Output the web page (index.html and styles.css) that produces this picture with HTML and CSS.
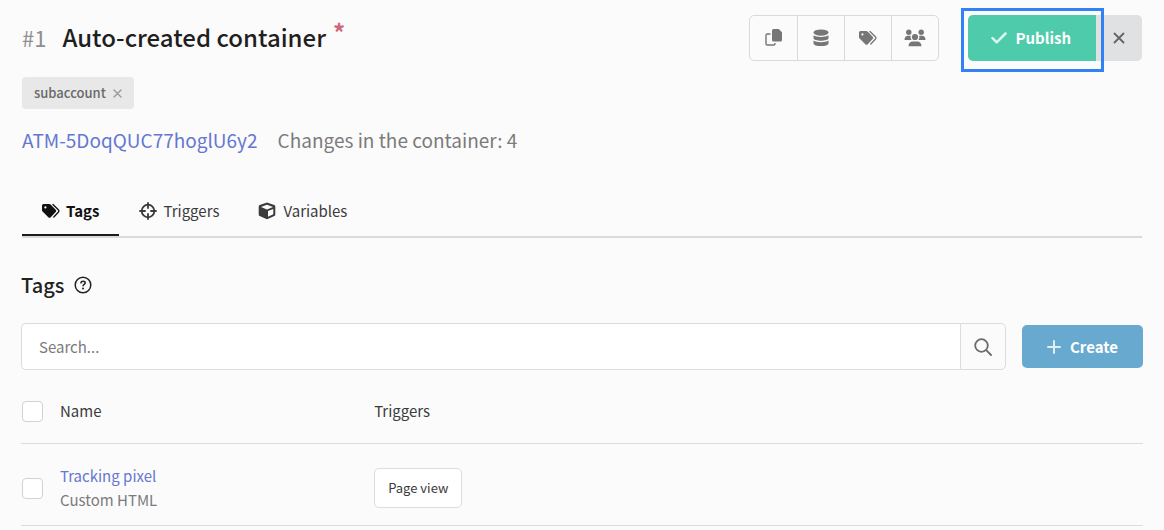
FILE: index.html
```html
<!DOCTYPE html>
<html lang="en">
<head>
<meta charset="utf-8">
<meta name="viewport" content="width=device-width, initial-scale=1">
<title>Auto-created container</title>
<link rel="stylesheet" href="styles.css">
</head>
<body>
<svg class="sprite" aria-hidden="true">
  <symbol id="tags" viewBox="0 0 18 16">
    <path fill="currentColor" fill-rule="evenodd" d="M0 2.500A1.500 1.500 0 0 1 1.500 1H7.200a2 2 0 0 1 1.400.6L13.700 6.700a1.700 1.700 0 0 1 0 2.400l-5 5.100a1.700 1.700 0 0 1-2.400 0L.6 8.600A2 2 0 0 1 0 7.200zM3.400 3.300a1.100 1.100 0 1 0 0 2.200 1.100 1.100 0 0 0 0-2.200z"/>
    <path fill="none" stroke="currentColor" stroke-width="1.300" stroke-linecap="round" d="M11 1.500l5.300 5.300a1.700 1.700 0 0 1 0 2.400L11.800 14"/>
  </symbol>
</svg>
<main class="page">
  <header class="header">
    <div class="heading">
      <span class="number">#1</span>
      <h1 class="title">Auto-created container</h1>
      <span class="required">*</span>
    </div>
    <div class="actions">
      <div class="tools">
        <button class="tool" type="button" aria-label="Copy">
          <svg width="18" height="18" viewBox="0 0 18 18"><path fill="currentColor" d="M8.500 0h5.200L17 3.300V11a1.500 1.500 0 0 1-1.500 1.500h-7A1.500 1.500 0 0 1 7 11V1.500A1.500 1.500 0 0 1 8.500 0z"/><path fill="none" stroke="currentColor" stroke-width="1.400" d="M5.500 5H2.200A1.200 1.200 0 0 0 1 6.200v8.600A1.200 1.200 0 0 0 2.200 16h6.600a1.200 1.200 0 0 0 1.200-1.200V14"/></svg>
        </button>
        <button class="tool" type="button" aria-label="Data">
          <svg width="18" height="18" viewBox="0 0 18 18"><g fill="currentColor"><ellipse cx="9" cy="3.600" rx="7.500" ry="3.200"/><path d="M1.500 6.200C4.500 8.500 13.500 8.500 16.500 6.200V9C16.500 12.600 1.500 12.600 1.500 9z"/><path d="M1.500 11.600c3 2.300 12 2.300 15 0v2.600c0 3.800-15 3.800-15 0z"/></g></svg>
        </button>
        <button class="tool" type="button" aria-label="Tags">
          <svg width="18" height="16"><use href="#tags"/></svg>
        </button>
        <button class="tool" type="button" aria-label="Users">
          <svg width="22" height="18" viewBox="0 0 22 18"><g fill="currentColor"><circle cx="4.800" cy="3.300" r="2.700"/><circle cx="17.200" cy="3.300" r="2.700"/><circle cx="11" cy="8" r="3.100"/><path d="M.5 11c0-3 1.500-4.200 3.500-4.200h2.800C6.300 8.500 6.700 10 7.600 11zM21.500 11c0-3-1.500-4.200-3.500-4.200h-2.800c.5 1.700.1 3.200-.8 4.200zM4.500 17.300c0-3 1.800-4.900 4.300-4.900h4.400c2.500 0 4.300 1.900 4.300 4.900z"/></g></svg>
        </button>
      </div>
      <div class="publish-group">
        <button class="publish" type="button">
          <svg width="16" height="12" viewBox="0 0 16 12"><path d="M1.500 6.200l4.200 4.200L14.500 1.500" fill="none" stroke="currentColor" stroke-width="2.500" stroke-linecap="round" stroke-linejoin="round"/></svg>
          Publish
        </button>
        <button class="dismiss" type="button" aria-label="Close">
          <svg width="12" height="12" viewBox="0 0 12 12"><path d="M1.500 1.500l9 9m0-9l-9 9" stroke="currentColor" stroke-width="1.800" stroke-linecap="round"/></svg>
        </button>
        <span class="focus-frame"></span>
      </div>
    </div>
  </header>

  <div class="labels">
    <span class="label">subaccount
      <button class="label-remove" type="button" aria-label="Remove subaccount"><svg width="9" height="9" viewBox="0 0 9 9"><path d="M1 1l7 7m0-7L1 8" stroke="currentColor" stroke-width="1.400" stroke-linecap="round"/></svg></button>
    </span>
  </div>

  <p class="summary"><a class="link" href="#container">ATM-5DoqQUC77hoglU6y2</a><span>Changes in the container: 4</span></p>

  <nav class="tabs">
    <a class="tab tab-active" href="#tags-tab"><svg width="18" height="16"><use href="#tags"/></svg>Tags</a>
    <a class="tab" href="#triggers-tab"><svg width="18" height="18" viewBox="0 0 18 18"><g fill="none" stroke="currentColor" stroke-width="1.800" stroke-linecap="round"><circle cx="9" cy="9" r="6.300"/><path d="M9 1v5M9 12v5M1 9h5M12 9h5"/></g></svg>Triggers</a>
    <a class="tab" href="#variables-tab"><svg width="18" height="18" viewBox="0 0 18 18"><path fill="currentColor" fill-rule="evenodd" d="M8.300.7a2 2 0 0 1 1.400 0l6.500 2.400A1.700 1.700 0 0 1 17.300 4.700v7.700a1.700 1.700 0 0 1-1 1.600l-6.600 3.100a1.700 1.700 0 0 1-1.400 0L1.700 14a1.700 1.700 0 0 1-1-1.600V4.700a1.700 1.700 0 0 1 1.100-1.600zM9 2.700L3 4.900l6 2.500 6-2.500zM10 9.100v5.700l5.300-2.600V6.900z"/></svg>Variables</a>
  </nav>

  <div class="section-heading">
    <h2 class="section-title">Tags</h2>
    <svg width="18" height="18" viewBox="0 0 18 18" role="img" aria-label="Help"><circle cx="9" cy="9" r="7.800" fill="none" stroke="currentColor" stroke-width="1.500"/><path d="M6.900 6.900c.1-1.200 1-1.700 2.200-1.700s2.100.7 2.100 1.700c0 1.400-2.100 1.500-2.100 2.800" fill="none" stroke="currentColor" stroke-width="1.500" stroke-linecap="round"/><circle cx="9" cy="12.500" r="1" fill="currentColor"/></svg>
  </div>

  <div class="toolbar">
    <form class="search" role="search">
      <input class="search-input" type="search" placeholder="Search..." aria-label="Search">
      <button class="search-button" type="button" aria-label="Search"><svg width="18" height="18" viewBox="0 0 18 18"><g fill="none" stroke="currentColor" stroke-width="1.800" stroke-linecap="round"><circle cx="7.500" cy="7.500" r="6.300"/><path d="M12.200 12.200L17 17"/></g></svg></button>
    </form>
    <button class="create" type="button"><svg width="14" height="14" viewBox="0 0 14 14"><path d="M7 1v12M1 7h12" stroke="currentColor" stroke-width="2" stroke-linecap="round"/></svg>Create</button>
  </div>

  <table class="table">
    <thead>
      <tr>
        <th class="cell-check"><input class="check" type="checkbox" aria-label="Select all"></th>
        <th class="cell-name">Name</th>
        <th>Triggers</th>
      </tr>
    </thead>
    <tbody>
      <tr>
        <td class="cell-check"><input class="check" type="checkbox" aria-label="Select Tracking pixel"></td>
        <td class="cell-name"><a class="link" href="#pixel">Tracking pixel</a><div class="kind">Custom HTML</div></td>
        <td><button class="trigger" type="button">Page view</button></td>
      </tr>
    </tbody>
  </table>
</main>
</body>
</html>
```
FILE: styles.css
```css
* {
  box-sizing: border-box;
}

body {
  margin: 0;
  background: #fbfbfb;
  color: #3b3b3b;
  font: 15px/24px "Noto Sans CJK SC", "Open Sans", sans-serif;
}

button,
input {
  margin: 0;
  font: inherit;
}

button {
  display: flex;
  align-items: center;
  justify-content: center;
  padding: 0;
  border: 0;
  background: none;
  color: inherit;
  cursor: pointer;
}

svg {
  flex: none;
}

.sprite {
  position: absolute;
  width: 0;
  height: 0;
}

.page {
  padding: 15px 21px 0;
}

.link {
  color: #6577d0;
  text-decoration: none;
}

.header {
  display: flex;
  align-items: flex-start;
  justify-content: space-between;
  padding-right: 1px;
}

.heading {
  display: flex;
  align-items: center;
  padding-left: 1px;
  line-height: 44px;
}

.number {
  margin-right: 16px;
  color: #8f8f8f;
  font-size: 22px;
}

.title {
  margin: 0;
  color: #1f1f1f;
  font-size: 24px;
  font-weight: 500;
}

.required {
  align-self: flex-start;
  margin-left: 7px;
  color: #d0677a;
  font-size: 24px;
  font-weight: 700;
  line-height: 34px;
}

.actions {
  display: flex;
  gap: 29px;
}

.tools {
  display: flex;
  border: 1px solid #d9d9d9;
  border-radius: 5px;
  color: #767676;
}

.tool {
  width: 47px;
  height: 44px;
}

.tool + .tool {
  border-left: 1px solid #d9d9d9;
}

.publish-group {
  position: relative;
  display: flex;
  height: 46px;
}

.publish {
  gap: 8px;
  padding: 0 25px 0 23px;
  border-radius: 5px 0 0 5px;
  background: #4ecbaa;
  color: #fff;
  font-weight: 700;
}

.publish svg,
.create svg {
  opacity: .8;
}

.dismiss {
  width: 46px;
  border-radius: 0 5px 5px 0;
  background: #e0e1e2;
  color: #636465;
}

.focus-frame {
  position: absolute;
  inset: -7px 38px -11px -7px;
  border: 3px solid #3282f6;
  pointer-events: none;
}

.labels {
  display: flex;
  margin: 16px 0 0 1px;
}

.label {
  display: flex;
  align-items: center;
  gap: 7px;
  padding: 4px 12px;
  border-radius: 4px;
  background: #e8e8e8;
  color: #686868;
  font-size: 13px;
  font-weight: 500;
}

.label-remove {
  color: #999;
}

.summary {
  display: flex;
  gap: 20px;
  margin: 15px 0 0 1px;
  color: #7b7b7b;
  font-size: 19px;
  line-height: 32px;
}

.tabs {
  display: flex;
  margin: 31px 1px 0;
  border-bottom: 2px solid #dadada;
}

.tab {
  display: flex;
  align-items: center;
  gap: 7px;
  padding: 12px 19px 11px 20px;
  border-bottom: 2px solid transparent;
  color: #3b3b3b;
  text-decoration: none;
}

.tab-active {
  gap: 6px;
  border-color: #1b1c1d;
  color: #111;
  font-weight: 700;
}

.section-heading {
  display: flex;
  align-items: center;
  gap: 10px;
  margin-top: 31px;
  color: #222;
}

.section-title {
  margin: 0;
  font-size: 20px;
  font-weight: 500;
  line-height: 32px;
}

.toolbar {
  display: flex;
  align-items: center;
  gap: 16px;
  margin-top: 22px;
}

.search {
  display: flex;
  flex: 1;
  height: 47px;
}

.search-input {
  flex: 1;
  min-width: 0;
  padding: 0 17px;
  border: 1px solid #dcdcdc;
  border-right: 0;
  border-radius: 5px 0 0 5px;
  background: #fff;
  appearance: none;
}

.search-input::placeholder {
  color: #7b7b7b;
}

.search-button {
  width: 46px;
  border: 1px solid #dcdcdc;
  border-radius: 0 5px 5px 0;
  color: #6b6b6b;
}

.create {
  gap: 9px;
  height: 43px;
  padding: 0 25px;
  border-radius: 5px;
  background: #68a9cf;
  color: #fff;
  font-weight: 700;
}

.table {
  width: 100%;
  margin-top: 10px;
  border-collapse: collapse;
}

.table th,
.table td {
  padding: 20px 0 13px;
  border-bottom: 1px solid #dcdcdc;
  font-weight: 400;
  text-align: left;
  vertical-align: middle;
}

.table th {
  padding: 19px 0 20px;
}

.table .cell-check {
  width: 39px;
  padding-left: 1px;
}

.cell-name {
  width: 28%;
}

.check {
  display: block;
  width: 21px;
  height: 21px;
  border: 1px solid #d2d2d2;
  border-radius: 4px;
  background: #fff;
  appearance: none;
}

.kind {
  color: #7b7b7b;
}

.trigger {
  height: 40px;
  padding: 0 13px;
  border: 1px solid #dcdcdc;
  border-radius: 5px;
  background: #fff;
  font-size: 13px;
}
```
